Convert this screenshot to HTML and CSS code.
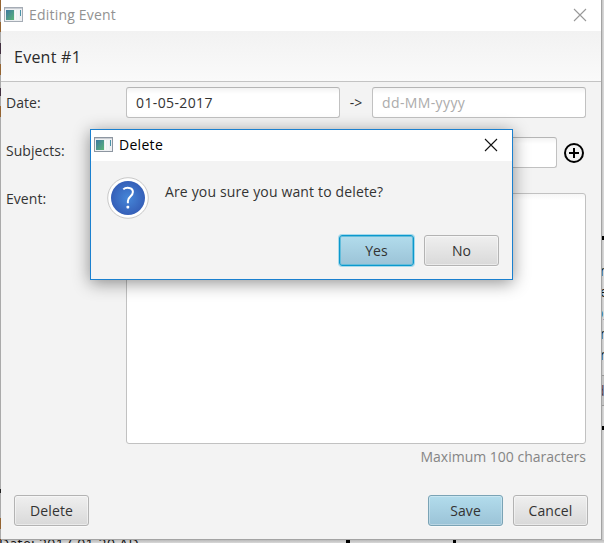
FILE: index.html
```html
<!DOCTYPE html>
<html lang="en">
<head>
<meta charset="utf-8">
<title>Editing Event</title>
<link rel="stylesheet" href="styles.css">
</head>
<body>
<div class="desktop">
  <div class="left-strip"></div>
  <i class="tick t1"></i><i class="tick t2"></i><i class="tick t3"></i><i class="tick t4"></i>
  <span class="frag f1">m</span><span class="frag f2">e</span><span class="frag f3">o_</span><span class="frag f4">m</span><span class="frag f5">r</span>
  <span class="behind-button">d</span>
  <span class="behind-date">Date: 2017-01-20 AD</span>
</div>
<main class="window">
  <header class="titlebar">
    <svg class="app-icon" viewBox="0 0 19 16"><defs><linearGradient id="g" x1="0" y1="0" x2="1" y2="1"><stop stop-color="#3c78a0"/><stop offset="1" stop-color="#5cb578"/></linearGradient></defs><rect x=".5" y=".5" width="18" height="14" fill="#eef0f2" stroke="#a5acb5"/><path d="M1 1.5h17" stroke="#c9cdd3"/><rect x="2" y="3" width="8" height="10" fill="url(#g)"/><path d="M11.5 3v10M14 3v10" stroke="#fafafa"/><path d="M16.5 3v6" stroke="#4a93a8"/></svg>
    <span class="title">Editing Event</span>
    <svg class="close" viewBox="0 0 12 12"><path d="M0 0l12 12M12 0L0 12"/></svg>
  </header>
  <h1 class="heading"><span>Event #1</span></h1>
  <section class="form">
    <label class="label">Date:</label>
    <div class="dates"><div class="field">01-05-2017</div><span class="arrow">-&gt;</span><div class="field hint">dd-MM-yyyy</div></div>
    <label class="label subjects-label">Subjects:</label>
    <div class="subjects"><div class="field"></div>
      <svg class="add" viewBox="0 0 20 20"><circle cx="10" cy="10" r="9"/><path d="M10 5v10M5 10h10"/></svg></div>
    <label class="label event-label">Event:</label>
    <div class="area"></div>
  </section>
  <p class="limit"><span>Maximum 100 characters</span></p>
  <footer class="actions">
    <button class="btn delete">Delete</button><button class="btn primary">Save</button><button class="btn">Cancel</button>
  </footer>
</main>
<div class="dialog">
  <header class="titlebar">
    <svg class="app-icon" viewBox="0 0 19 16"><rect x=".5" y=".5" width="18" height="14" fill="#eef0f2" stroke="#8d96a1"/><path d="M1 1.5h17" stroke="#c9cdd3"/><rect x="2" y="3" width="8" height="10" fill="url(#g)"/><path d="M11.5 3v10M14 3v10" stroke="#fafafa"/><path d="M16.5 3v6" stroke="#4a93a8"/></svg>
    <span class="title">Delete</span>
    <svg class="close" viewBox="0 0 12 12"><path d="M0 0l12 12M12 0L0 12"/></svg>
  </header>
  <div class="message">
    <svg class="question" viewBox="0 0 42 42"><defs><radialGradient id="q"><stop stop-color="#4687d8"/><stop offset="1" stop-color="#355fb8"/></radialGradient></defs><circle cx="21" cy="21" r="20.3" fill="#fff" stroke="#c8c8c8"/><circle cx="21" cy="21" r="17" fill="url(#q)"/><path d="M16.3 12.4c2.4-2.3 9.6-2.6 9.6 2.6 0 4.5-5 4.6-5 9v2.2" fill="none" stroke="#fff" stroke-width="2"/><rect x="19.5" y="28.7" width="2.7" height="2.8" rx=".7" fill="#fff"/></svg>
    <span class="ask">Are you sure you want to delete?</span>
  </div>
  <div class="choices"><button class="btn primary focused">Yes</button><button class="btn">No</button></div>
</div>
</body>
</html>
```
FILE: styles.css
```css
* { box-sizing: border-box; }
body {
  margin: 0;
  width: 604px;
  height: 543px;
  overflow: hidden;
  position: relative;
  background: #d0d0d0;
  font: 14px/20px "Open Sans", "Noto Sans", sans-serif;
  color: #333;
}
.desktop { position: absolute; inset: 0; overflow: hidden; color: #111; background: linear-gradient(90deg, #a8a8a8 600px, #c5c5c5 602px, #dcdcdc 604px); }
.desktop::before { content: ""; position: absolute; left: 0; right: 0; top: 540px; height: 3px; background: linear-gradient(#bbb, #d8d8d8); }
.left-strip {
  position: absolute; left: 0; top: 0; width: 1px; height: 543px;
  background: linear-gradient(#946432 0 11px, #aaa 11px 22px, #946432 22px 32px, #aaa 32px 43px, #423040 43px 54px, #aaa 54px 64px, #946432 64px 75px, #aaa 75px 88px, #423040 88px 96px, #aaa 96px 106px, #946432 106px 117px, #aaa 117px 489px, #222 489px 493px, #aaa 493px 518px, #946432 518px 529px, #aaa 529px);
}
.tick { position: absolute; width: 4px; height: 4px; background: #000; }
.t1 { left: 601px; top: 236px; }
.t2 { left: 601px; top: 426px; }
.t3 { left: 346px; top: 539px; }
.t4 { left: 453px; top: 539px; width: 3px; }
.frag { position: absolute; left: 600px; }
.f1 { top: 261px; }
.f2 { top: 282px; }
.f3 { top: 303px; left: 595px; color: #2a6da5; }
.f4 { top: 324px; }
.f5 { top: 345px; }
.behind-button { position: absolute; left: 594px; top: 375px; width: 20px; height: 31px; padding: 5px 0 0 1px; border: 1px solid #999; background: #c2c2c2; color: #524050; }
.behind-date { position: absolute; left: -1px; top: 535px; line-height: 18px; letter-spacing: .32px; }
.window {
  position: relative;
  display: flex; flex-direction: column;
  margin-left: 1px;
  width: 601px; height: 540px;
  background: #f3f3f3;
  border: solid #a3a3a3; border-width: 0 1px 1px 0;
}
.titlebar { display: flex; align-items: center; height: 31px; background: #fff; flex: none; }
.app-icon { width: 19px; height: 16px; margin: 0 6px 1px 3px; }
.title { flex: 1; line-height: 30px; padding-bottom: 1px; letter-spacing: .2px; }
.window .title { color: #929292; }
.close { width: 12px; height: 12px; margin: 0 15px 1px 0; fill: none; stroke: #999; stroke-width: 1.1; overflow: visible; }
.heading { margin: 0; height: 51px; padding: 15px 13px; font-size: 16px; line-height: 22px; font-weight: 400; letter-spacing: .25px; color: #2b2b2b; background: linear-gradient(#f2f2f2, #fafafa); border-bottom: 1px solid #c3c3c3; }
.form { display: grid; grid-template-columns: 120px 460px; grid-template-rows: 50px 56px 251px; padding: 5px 0 0 5px; }
.label { line-height: 31px; letter-spacing: .05px; }
.subjects-label { line-height: 27px; }
.event-label { line-height: 12px; }
.dates, .subjects { display: flex; height: 31px; }
.field { width: 214px; border: 1px solid #c1c1c1; border-top-color: #b5b5b5; border-radius: 3px; background: linear-gradient(#f3f3f3, #fff 6px); padding: 0 9px; line-height: 30px; letter-spacing: .38px; }
.subjects .field { width: 431px; }
.arrow { width: 32px; text-align: center; line-height: 31px; }
.hint { color: #acacac; }
.add { width: 20px; height: 20px; margin: 6px 0 0 7px; fill: none; stroke: #000; stroke-width: 2; }
.area { border: 1px solid #c1c1c1; border-radius: 3px; background: linear-gradient(#f6f6f6, #fff 6px); }
.limit { margin: 3px 15px 0 0; text-align: right; color: #858585; }
.actions { display: flex; gap: 10px; margin: auto 13px 13px 13px; }
.btn {
  width: 75px; height: 31px; padding: 0; border: 1px solid #b3b3b3; border-radius: 3px;
  background: linear-gradient(#efefef, #d9d9d9);
  box-shadow: inset 0 0 0 1px rgba(255,255,255,.45), 0 1px 0 #fafafa;
  font: inherit; line-height: 28px; letter-spacing: .1px; color: #333;
}
.delete { margin-right: auto; }
.primary { background: linear-gradient(#b2dcec, #9bc3d7); border-color: #7aa3b5; box-shadow: inset 0 0 0 1px rgba(255,255,255,.3), 0 1px 0 #fafafa; }
.focused { border-color: #0b98cd; box-shadow: 0 0 0 1px #a5d9eb, inset 0 0 0 1px #64bddb; }
.dialog { position: absolute; left: 90px; top: 129px; width: 423px; height: 151px; background: #f3f3f3; border: 1px solid #1a80cf; box-shadow: 0 3px 16px rgba(0,0,0,.43); }
.dialog .title { color: #000; letter-spacing: .3px; }
.dialog .close { stroke: #111; }
.message { display: flex; gap: 16px; padding: 16px 0 0 16px; }
.question { width: 42px; height: 42px; }
.ask { padding-top: 5px; letter-spacing: .15px; }
.choices { display: flex; justify-content: flex-end; gap: 10px; padding-right: 13px; margin-top: 16px; }
```
